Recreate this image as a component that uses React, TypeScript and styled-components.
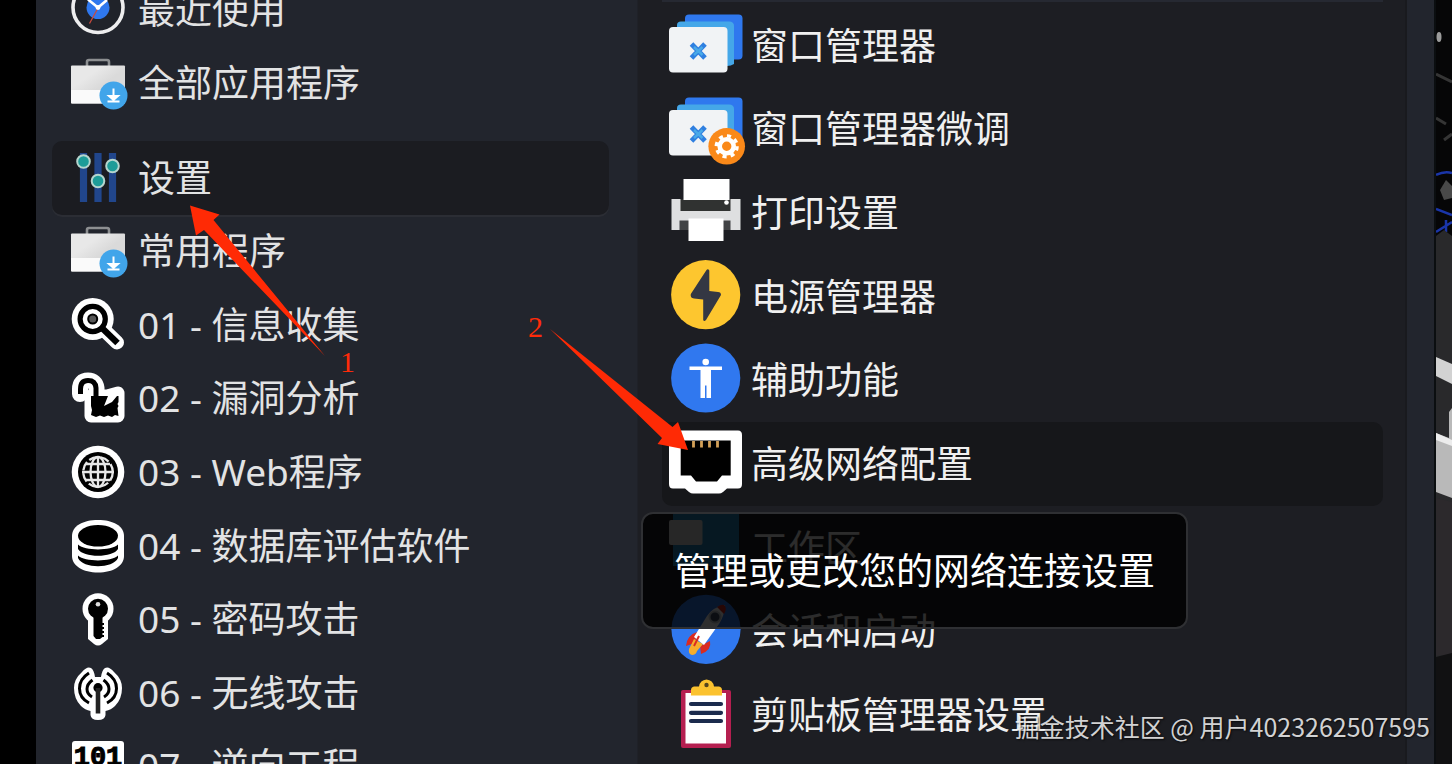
import React from "react";
import styled, { createGlobalStyle } from "styled-components";

const GlobalStyle = createGlobalStyle`
  * { box-sizing: border-box; }
  body {
    margin: 0;
    background: #000;
    color: #e4e4e4;
    font-family: "Noto Sans", "Noto Sans CJK SC", sans-serif;
  }
`;

const Desktop = styled.div`
  position: relative;
  display: grid;
  grid-template-columns: 36px minmax(0, 601fr) minmax(0, 770fr) 29px 16px;
  height: 100vh;
  overflow: hidden;
  background: #000;
`;

const Categories = styled.nav`
  grid-column: 2;
  padding: 0 28px 0 16px;
  background: #22252d;
`;

const Programs = styled.main`
  padding: 0 22px 0 24px;
  background: #1d1e23;
  border-left: 1px solid #1f2128;
  border-right: 2px solid #191a1e;
`;

const MenuEdge = styled.div`
  background: #22252d;
  border-right: 2px solid #0b0e10;
`;

const Wallpaper = styled.svg`
  width: 16px;
  height: 764px;
`;

const Group = styled.div<{ $rows: number; $height: number; $top: number }>`
  display: grid;
  grid-template-rows: repeat(${(p) => p.$rows}, 1fr);
  height: ${(p) => p.$height}px;
  margin-top: ${(p) => p.$top}px;
`;

const TopRule = styled.div`
  height: 2px;
  background: #262932;
`;

const RowSlot = styled.div`
  position: relative;
  display: grid;
`;

const Row = styled.button<{ $active?: boolean; $large?: boolean }>`
  display: flex;
  align-items: center;
  gap: ${(p) => (p.$large ? 8 : 12)}px;
  min-height: 0;
  padding: 0 0 0 ${(p) => (p.$large ? 7 : 18)}px;
  border: 0;
  border-radius: 10px;
  background: ${(p) => (p.$active ? (p.$large ? "#16171a" : "#1b1c21") : "transparent")};
  box-shadow: ${(p) => (p.$active && !p.$large ? "0 2px 0 #2b2d34" : "none")};
  color: ${(p) => (p.$large ? "#f0f0f0" : "#e2e3e4")};
  font: inherit;
  font-size: 37px;
  line-height: 48px;
  text-align: left;
  white-space: nowrap;
  cursor: pointer;

  svg {
    flex: none;
    width: ${(p) => (p.$large ? 74 : 56)}px;
    height: ${(p) => (p.$large ? 74 : 56)}px;
    overflow: visible;
  }
`;

const Tooltip = styled.div`
  position: absolute;
  z-index: 1;
  top: 90px;
  left: -21px;
  padding: 32px 31px;
  border: 2px solid #2f3033;
  border-radius: 12px;
  background: rgba(0, 0, 0, 0.82);
  color: #fff;
  font-size: 37px;
  line-height: 49px;
  white-space: nowrap;
`;

const Arrows = styled.svg`
  position: absolute;
  z-index: 2;
  top: 0;
  left: 0;
  width: 700px;
  height: 460px;
  pointer-events: none;
`;

const Mark = styled.span<{ $x: number; $y: number }>`
  position: absolute;
  z-index: 2;
  left: ${(p) => p.$x}px;
  top: ${(p) => p.$y}px;
  color: #ff2b0a;
  font-family: "Liberation Serif", serif;
  font-size: 30px;
  line-height: 32px;
`;

const Watermark = styled.div`
  position: absolute;
  z-index: 3;
  right: 22px;
  bottom: 20px;
  color: rgba(255, 255, 255, 0.82);
  font-family: "Noto Sans CJK SC", sans-serif;
  font-size: 25px;
  line-height: 36px;
  text-shadow: 1px 1px 2px rgba(0, 0, 0, 0.7);
`;

const ClockIcon = () => (
  <svg viewBox="0 0 56 56" aria-hidden="true">
    <circle cx="28" cy="25.5" r="25" fill="#20232a" stroke="#eeeeef" strokeWidth="3.6" />
    <circle cx="28" cy="25.5" r="11.5" fill="#2f78ee" />
    <path d="M18 17.5L28 25.5L37 18" fill="none" stroke="#fff" strokeWidth="2.6" />
    <path d="M28 26L19.5 41.5" stroke="#c94a3d" strokeWidth="1.3" />
    <circle cx="28" cy="25.5" r="2.4" fill="#fff" />
  </svg>
);

const CaseIcon = () => (
  <svg viewBox="0 0 56 56" aria-hidden="true">
    <defs>
      <linearGradient id="caseFill" x1="0" y1="0" x2="1" y2="1">
        <stop offset="0.3" stopColor="#e8e8e8" />
        <stop offset="0.55" stopColor="#dadada" />
      </linearGradient>
    </defs>
    <path d="M17 11V7Q17 5 19 5H37Q39 5 39 7V11" fill="none" stroke="#8d8f91" strokeWidth="2.6" />
    <rect x="1" y="10.5" width="54" height="38" rx="1" fill="url(#caseFill)" />
    <path d="M1 35H55V47.5Q55 48.500 54 48.500H2Q1 48.500 1 47.500Z" fill="#fafafa" />
    <circle cx="43.5" cy="40.5" r="14" fill="#41a5ea" />
    <path d="M43.5 33.5V42.5M39 41H48L43.5 45ZM37.5 46.5H49.5" fill="#fff" stroke="#fff" strokeWidth="2" />
  </svg>
);

const SlidersIcon = () => (
  <svg viewBox="0 0 56 56" aria-hidden="true">
    <path d="M13.5 3V52M28 3V52M42.5 3V52" stroke="#21468c" strokeWidth="7.2" />
    <g fill="#1d9c98" stroke="#b5d5ce" strokeWidth="2">
      <circle cx="13.5" cy="11.5" r="6.3" />
      <circle cx="28" cy="31" r="6.3" />
      <circle cx="42.5" cy="16" r="6.3" />
    </g>
  </svg>
);

const SearchIcon = () => (
  <svg viewBox="0 0 56 56" aria-hidden="true">
    <path d="M32 31L47 45.5" stroke="#fff" strokeWidth="14" strokeLinecap="round" />
    <circle cx="22.7" cy="22" r="21" fill="#fff" />
    <path d="M32 31L47.5 46" stroke="#000" strokeWidth="6.4" />
    <circle cx="22.7" cy="22" r="12.6" fill="#fff" stroke="#000" strokeWidth="5.2" />
    <circle cx="22.7" cy="22" r="4.5" fill="#555" stroke="#000" strokeWidth="2" />
  </svg>
);

const UnlockIcon = () => (
  <svg viewBox="0 0 56 56" aria-hidden="true">
    <path d="M10 24V19Q10 10.5 18 10.5Q25.5 10.5 26.5 18V26" fill="none" stroke="#fff" strokeWidth="16" strokeLinecap="round" strokeLinejoin="round" />
    <path d="M21 26H37L48 23V46H21Z" fill="#fff" stroke="#fff" strokeWidth="13" strokeLinejoin="round" />
    <path d="M10.5 24V19Q10.5 10.5 18 10.5Q25.5 10.5 26 18V27" fill="none" stroke="#000" strokeWidth="5" />
    <path d="M21 26H38L34 36L42 32L47 26H48.500V32L47.500 34L48.500 36L47.500 38L48.500 46L45 45L42 47L38 45.500L34 47L30 45.500L26 47L21 45L22 40L21 36Z" fill="#000" />
  </svg>
);

const GlobeIcon = () => (
  <svg viewBox="0 0 56 56" aria-hidden="true">
    <circle cx="28" cy="28" r="26.3" fill="#fff" />
    <circle cx="28" cy="28" r="20" fill="#000" />
    <g fill="none" stroke="#e7e7e7" strokeWidth="2.3">
      <ellipse cx="28" cy="28" rx="7.5" ry="15" />
      <circle cx="28" cy="28" r="14.8" strokeDasharray="9 3" />
      <path d="M28 12V44M12 28H44M16 20H40M16 36H40" />
    </g>
  </svg>
);

const DatabaseIcon = () => (
  <svg viewBox="0 0 56 56" aria-hidden="true">
    <path d="M2 18C2 8 13 2 28 2S54 8 54 18V38C54 48 43 54.5 28 54.5S2 48 2 38Z" fill="#fff" />
    <ellipse cx="28" cy="17.8" rx="20" ry="10.8" fill="#000" />
    <path d="M8 26.5C15 33 41 33 48 26.5V31C43 40 13 40 8 31Z" fill="#000" />
    <path d="M8 37.5C15 44 41 44 48 37.5V40C43 51 13 51 8 40Z" fill="#000" />
  </svg>
);

const KeyIcon = () => (
  <svg viewBox="0 0 56 56" aria-hidden="true">
    <circle cx="28" cy="17.8" r="15.5" fill="#fff" />
    <path d="M18 28H38V48L32 53Q28 56 24 53L18 48Z" fill="#fff" />
    <circle cx="28" cy="17.8" r="10" fill="#000" />
    <path d="M23.5 24H32.5V46L30 48H26L23.5 45Z" fill="#000" />
    <path d="M33 32V46" stroke="#000" strokeWidth="2" strokeDasharray="2 2" />
    <circle cx="28" cy="13.3" r="2.3" fill="#ddd" />
  </svg>
);

const AntennaIcon = () => (
  <svg viewBox="0 0 56 56" aria-hidden="true">
    <path d="M21 3Q24 5 25 12H31Q32 5 35 3Q39 1 44 7Q52 14 52 23Q52 34 45 41Q41 45 35.5 46V50Q35 55 28 55Q21 55 20.5 50V46Q15 45 11 41Q4 34 4 23Q4 14 12 7Q17 1 21 3Z" fill="#fff" />
    <g fill="none" stroke="#000" strokeWidth="3">
      <path d="M19 8Q9.5 14 9.5 23.5Q9.5 33 19 38M37 8Q46.5 14 46.5 23.5Q46.5 33 37 38" />
      <path d="M22.5 15Q17 19 17 24Q17 29 22 32M33.5 15Q39 19 39 24Q39 29 34 32" />
    </g>
    <circle cx="28" cy="22.7" r="4.6" fill="#000" />
    <path d="M28 23V48.5" stroke="#222" strokeWidth="4.6" />
  </svg>
);

const BinaryIcon = () => (
  <svg viewBox="0 0 56 56" aria-hidden="true">
    <rect x="2" y="3" width="52" height="52" rx="3" fill="#fff" />
    <text x="28" y="27" fill="#000" stroke="#000" strokeWidth="1" fontFamily="Liberation Mono, monospace" fontSize="27" fontWeight="700" textAnchor="middle">
      101
    </text>
  </svg>
);

const WindowStack = () => (
  <>
    <rect x="16" y="5.5" width="57.5" height="45" rx="4" fill="#2f78ee" />
    <path d="M12 12.5H60Q65 12.5 65 17V55Q62 57 58 57H8V16Q8 12.5 12 12.5Z" fill="#45a7e8" />
    <rect x="0" y="18" width="58.5" height="45.5" rx="4" fill="#f1f3f5" />
    <path d="M22.5 35L36 49M36 35L22.5 49" stroke="#2f7fe0" strokeWidth="5" />
    <path d="M25 38L33.5 46M33.5 38L25 46" stroke="#49a9e8" strokeWidth="2.5" />
  </>
);

const WindowsIcon = () => (
  <svg viewBox="0 0 74 74" aria-hidden="true">
    <WindowStack />
  </svg>
);

const WindowsTweakIcon = () => (
  <svg viewBox="0 0 74 74" aria-hidden="true">
    <WindowStack />
    <circle cx="57.7" cy="54.3" r="18.3" fill="#fa8919" />
    <circle cx="57.7" cy="54.3" r="7" fill="none" stroke="#fff" strokeWidth="4.6" />
    <circle cx="57.7" cy="54.3" r="10.4" fill="none" stroke="#fff" strokeWidth="3.4" strokeDasharray="4.08 4.08" />
  </svg>
);

const PrinterIcon = () => (
  <svg viewBox="0 0 74 74" aria-hidden="true">
    <path d="M2.5 23H71.5V54H2.5Z" fill="#dedfe0" />
    <path d="M11.5 23H61.5V35H11.5Z" fill="#303231" />
    <path d="M14.5 3H60.5V24H14.5Z" fill="#fff" />
    <circle cx="57.5" cy="26.5" r="2.3" fill="#fff" />
    <path d="M10.5 44.5H61.5V54H10.5Z" fill="#414345" />
    <path d="M19.5 42.5H54.5V65H19.5Z" fill="#fff" />
  </svg>
);

const PowerIcon = () => (
  <svg viewBox="0 0 74 74" aria-hidden="true">
    <circle cx="36.7" cy="34.7" r="34.6" fill="#fdc62f" />
    <path d="M37.5 10L21.8 34Q21 38 25 38.5L34.2 39.5V60Q35 62 37 60L52 35Q52 32 49 32L40.3 31V10.5Q39 8.5 37.5 10Z" fill="#343743" />
  </svg>
);

const AccessIcon = () => (
  <svg viewBox="0 0 74 74" aria-hidden="true">
    <circle cx="36.7" cy="35" r="34.6" fill="#3078ef" />
    <circle cx="36.7" cy="19" r="3.3" fill="#fff" />
    <path d="M20.5 23.5H53V27H42V55H37.5V42.5H36V55H31.5V27H20.5Z" fill="#fff" />
  </svg>
);

const EthernetIcon = () => (
  <svg viewBox="0 0 74 74" aria-hidden="true">
    <path d="M4 3.5H69Q73 3.5 73 8V57Q73 61.5 69 61.5H58L54 65Q52 66.5 50 66.5H24Q22 66.5 20 65L16 61.5H4Q0 61.5 0 57V8Q0 3.5 4 3.5Z" fill="#fff" />
    <path d="M11.7 13.5H61.7V48.5H53L48 54.5H27L22 48.5H11.7Z" fill="#000" />
    <path d="M24.5 14V20.5M32.5 14V20.5M40.5 14V20.5M48.5 14V20.5" stroke="#d3a058" strokeWidth="2.8" />
  </svg>
);

const WorkspaceIcon = () => (
  <svg viewBox="0 0 74 74" aria-hidden="true">
    <rect x="4" y="3" width="66" height="52" fill="#2388bd" />
    <rect x="0" y="9" width="33.5" height="25" rx="2" fill="#d5d5d5" />
  </svg>
);

const RocketIcon = () => (
  <svg viewBox="0 0 74 74" aria-hidden="true">
    <circle cx="37" cy="35.3" r="34.6" fill="#3078ef" />
    <path d="M28 38Q18 41 17 52L26 49ZM41 47Q43 56 32 60L31 52Z" fill="#d92b20" />
    <path d="M25 45L20 55Q19 60 23 61Q27 61 28 57L34 50Z" fill="#f7ad2c" />
    <path d="M55.5 11Q44 13 38 22L25 43L35 51L50 30Q56 21 55.5 11Z" fill="#fff" />
    <path d="M48 13Q54 9 56 12Q58 15 55 20Z" fill="#d92b20" />
    <circle cx="46" cy="23" r="5.5" fill="#425166" stroke="#c9ced3" strokeWidth="2" />
    <path d="M30 42L25 52" stroke="#d92b20" strokeWidth="2" />
  </svg>
);

const ClipboardIcon = () => (
  <svg viewBox="0 0 74 74" aria-hidden="true">
    <rect x="12" y="12" width="50" height="58" rx="2" fill="#b51f50" />
    <rect x="16.5" y="15" width="40.5" height="50.5" fill="#fff" />
    <path d="M22 17.5V12Q22 9 25 8.5H30Q31 2 37.5 1.5Q44 2 45 8.5H50Q53 9 53 12V17.5Z" fill="#fbc22f" />
    <circle cx="37.5" cy="7" r="2.2" fill="#55451d" />
    <path d="M22 26H52M22 34.8H52M22 43H52" stroke="#1b2b4d" strokeWidth="4.2" strokeLinecap="round" />
  </svg>
);

type Entry = { label: string; Icon: React.FC; active?: boolean; tip?: string };

const shortcuts: Entry[] = [
  { label: "最近使用", Icon: ClockIcon },
  { label: "全部应用程序", Icon: CaseIcon },
];

const categories: Entry[] = [
  { label: "设置", Icon: SlidersIcon, active: true },
  { label: "常用程序", Icon: CaseIcon },
  { label: "01 - 信息收集", Icon: SearchIcon },
  { label: "02 - 漏洞分析", Icon: UnlockIcon },
  { label: "03 - Web程序", Icon: GlobeIcon },
  { label: "04 - 数据库评估软件", Icon: DatabaseIcon },
  { label: "05 - 密码攻击", Icon: KeyIcon },
  { label: "06 - 无线攻击", Icon: AntennaIcon },
  { label: "07 - 逆向工程", Icon: BinaryIcon },
];

const programs: Entry[] = [
  { label: "窗口管理器", Icon: WindowsIcon },
  { label: "窗口管理器微调", Icon: WindowsTweakIcon },
  { label: "打印设置", Icon: PrinterIcon },
  { label: "电源管理器", Icon: PowerIcon },
  { label: "辅助功能", Icon: AccessIcon },
  { label: "高级网络配置", Icon: EthernetIcon, active: true, tip: "管理或更改您的网络连接设置" },
  { label: "工作区", Icon: WorkspaceIcon },
  { label: "会话和启动", Icon: RocketIcon },
  { label: "剪贴板管理器设置", Icon: ClipboardIcon },
];

const Entries = ({ items, large }: { items: Entry[]; large?: boolean }) => (
  <>
    {items.map(({ label, Icon, active, tip }) => (
      <RowSlot key={label}>
        <Row type="button" $active={active} $large={large}>
          <Icon />
          {label}
        </Row>
        {tip && <Tooltip role="tooltip">{tip}</Tooltip>}
      </RowSlot>
    ))}
  </>
);

export default function App() {
  return (
    <>
      <GlobalStyle />
      <Desktop>
        <Categories>
          <Group $rows={2} $height={147} $top={-27}>
            <Entries items={shortcuts} />
          </Group>
          <Group $rows={9} $height={662} $top={21}>
            <Entries items={categories} />
          </Group>
        </Categories>
        <Programs>
          <TopRule />
          <Group $rows={9} $height={753} $top={2}>
            <Entries items={programs} large />
          </Group>
        </Programs>
        <MenuEdge />
        <Wallpaper viewBox="0 0 16 764" aria-hidden="true">
          <rect width="16" height="764" fill="#060607" />
          <ellipse cx="3" cy="37" rx="2.5" ry="5" fill="#9b9b9b" />
          <path d="M0 74L16 82M0 118L10 124M8 140L16 134" stroke="#353535" strokeWidth="3" />
          <path d="M4 190L10 180L16 186V198L8 200Z" fill="#494949" />
          <path d="M0 175Q8 171 16 173M0 209L16 215M0 232L16 222M10 220V232" fill="none" stroke="#1a35a8" strokeWidth="2.5" />
          <path d="M0 236L8 230L16 236V764H0Z" fill="#29292b" />
          <path d="M0 357L16 364V384L0 376Z" fill="#d2d2d2" />
          <path d="M0 433L13 438V412L16 408V498L0 492Z" fill="#b9b9b9" />
          <path d="M0 433L16 440V446L0 440Z" fill="#ececec" />
          <path d="M0 498L16 502V655H0Z" fill="#2c292c" />
          <path d="M0 657L16 653V764H0Z" fill="#111112" />
        </Wallpaper>
        <Arrows viewBox="0 0 700 460" aria-hidden="true">
          <path d="M190 205.5L219.5 214.5L213.5 220L325 356L204 230L196 235.5Z" fill="#ff2a05" />
          <path d="M550 329L672.5 427L678 422L688 450L657.5 444L662 438Z" fill="#ff2a05" />
        </Arrows>
        <Mark $x={340} $y={346}>1</Mark>
        <Mark $x={528} $y={311}>2</Mark>
        <Watermark>掘金技术社区 @ 用户4023262507595</Watermark>
      </Desktop>
    </>
  );
}
